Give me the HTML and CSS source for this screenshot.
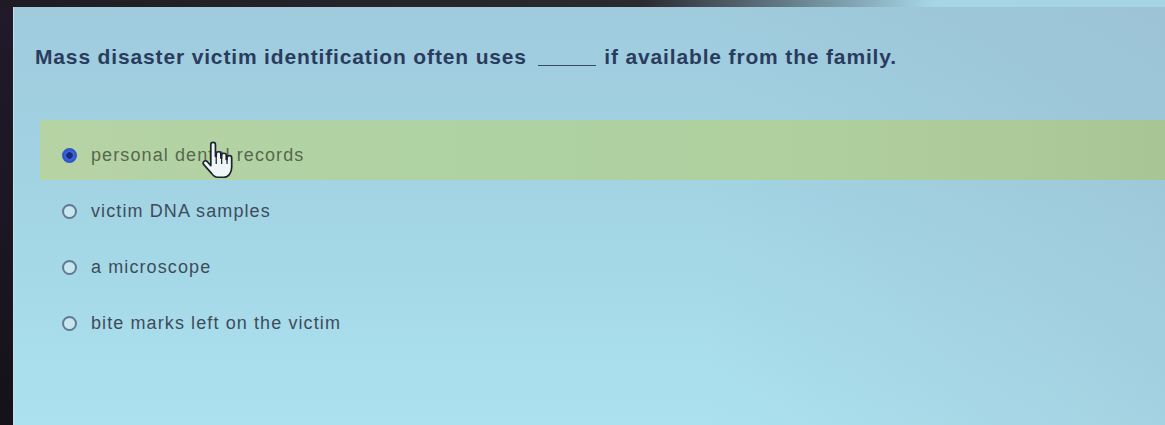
FILE: index.html
```html
<!DOCTYPE html>
<html lang="en">
<head>
<meta charset="utf-8">
<title>Quiz question</title>
<link rel="stylesheet" href="styles.css">
</head>
<body>
<div class="bezel-top"></div>
<div class="frame">
  <div class="bezel-side"></div>
  <main class="screen">
    <p class="question">Mass disaster victim identification often uses <span class="blank"></span> if available from the family.</p>
    <ul class="options">
      <li class="option selected">
        <span class="radio checked"></span>
        <span class="label">personal dental records</span>
        <svg class="cursor" viewBox="0 0 22 24" width="34" height="40" aria-hidden="true">
          <path d="M7 1.5a1.5 1.5 0 0 1 3 0V9h.5V7.5a1.5 1.5 0 0 1 3 0V10h.5V8.5a1.5 1.5 0 0 1 3 0V11h.5V10a1.5 1.5 0 0 1 3 0v6c0 3.5-2 6.5-5 6.5h-4c-2 0-3-1-4-2.5L2.3 14.2a1.5 1.5 0 0 1 2.5-1.7L7 15Z" fill="#eef6f6" stroke="#1c2430" stroke-width="1.1" stroke-linejoin="round"/>
          <path d="M10.5 9v5M14 10v4M17.5 11v3" stroke="#1c2430" stroke-width="0.8" fill="none"/>
        </svg>
      </li>
      <li class="option">
        <span class="radio"></span>
        <span class="label">victim DNA samples</span>
      </li>
      <li class="option">
        <span class="radio"></span>
        <span class="label">a microscope</span>
      </li>
      <li class="option">
        <span class="radio"></span>
        <span class="label">bite marks left on the victim</span>
      </li>
    </ul>
  </main>
</div>
</body>
</html>
```

FILE: styles.css
```css
html, body {
  margin: 0;
  padding: 0;
  height: 100%;
  overflow: hidden;
}

body {
  display: flex;
  flex-direction: column;
  background: #a6d6e6;
  font-family: "Liberation Sans", Arial, sans-serif;
}

/* dark monitor edge along the top, fading toward the right */
.bezel-top {
  flex: 0 0 7px;
  background: linear-gradient(90deg, #1f1b24 0%, #2a2a30 55%, rgba(60, 70, 80, 0.6) 68%, rgba(150, 190, 205, 0) 80%);
}

.frame {
  flex: 1;
  display: flex;
  min-height: 0;
}

.bezel-side {
  flex: 0 0 13px;
  background: linear-gradient(180deg, #22192a 0%, #1a1620 60%, #141218 100%);
}

.screen {
  flex: 1;
  position: relative;
  padding: 37px 0 0 21px;
  border-left: 1px solid #c4e0ea;
  background:
    linear-gradient(90deg, rgba(255, 255, 255, 0) 60%, rgba(150, 180, 200, 0.35) 100%),
    linear-gradient(180deg, #9fcbdd 0%, #a2d4e4 45%, #ace2ef 100%);
}

.question {
  margin: 0;
  font-size: 21px;
  line-height: 26px;
  font-weight: bold;
  color: #2a3c5e;
  letter-spacing: 0.85px;
}

.blank {
  display: inline-block;
  width: 58px;
  margin: 0 2px 0 4px;
  border-bottom: 1px solid #3a4a66;
  vertical-align: -2px;
}

.options {
  list-style: none;
  margin: 50px 0 0 5px;
  padding: 0;
}

.option {
  display: flex;
  align-items: center;
  gap: 14px;
  height: 50px;
  padding: 6px 0 0 22px;
  font-size: 18px;
  letter-spacing: 1.1px;
  color: #3e4c5a;
  position: relative;
}

.option.selected {
  padding-top: 10px;
  background: linear-gradient(90deg, #b6d3a4 0%, #aed2a2 40%, #b0cf9e 70%, #a8c596 100%);
  color: #56684e;
}

.radio {
  flex: 0 0 auto;
  width: 11px;
  height: 11px;
  border-radius: 50%;
  border: 2px solid #617a92;
  background: #c6e6f0;
}

.radio.checked {
  border-color: #2f55c8;
  background: radial-gradient(circle, #1c2a7a 0 3px, #3a62d8 3.5px);
}

.cursor {
  position: absolute;
  left: 160px;
  top: 21px;
}
```
